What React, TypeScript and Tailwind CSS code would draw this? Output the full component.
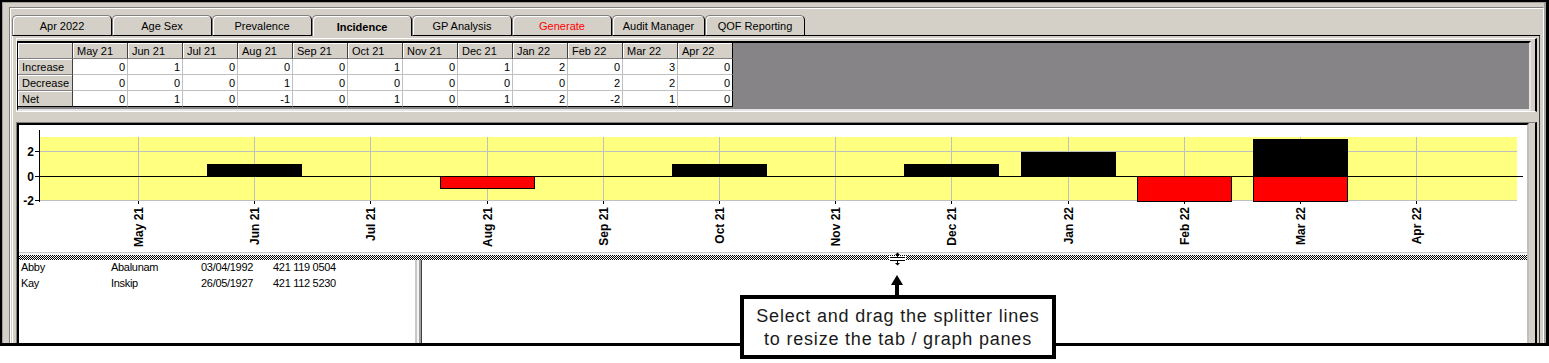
import React from 'react';

const months = ['May 21', 'Jun 21', 'Jul 21', 'Aug 21', 'Sep 21', 'Oct 21', 'Nov 21', 'Dec 21', 'Jan 22', 'Feb 22', 'Mar 22', 'Apr 22'];
const increase = [0, 1, 0, 0, 0, 1, 0, 1, 2, 0, 3, 0];
const decrease = [0, 0, 0, 1, 0, 0, 0, 0, 0, 2, 2, 0];
const net = increase.map((v, i) => v - decrease[i]);

const tabs = [
    { label: 'Apr 2022', w: 'w-[100px]' },
    { label: 'Age Sex', w: 'w-[100px]' },
    { label: 'Prevalence', w: 'w-[100px]' },
    { label: 'Incidence', w: 'w-[100px]', selected: true },
    { label: 'GP Analysis', w: 'w-[100px]' },
    { label: 'Generate', w: 'w-[100px]', red: true },
    { label: 'Audit Manager', w: 'w-[93px]' },
    { label: 'QOF Reporting', w: 'w-[100px]' },
];

const patients = [
    ['Abby', 'Abalunam', '03/04/1992', '421 119 0504'],
    ['Kay', 'Inskip', '26/05/1927', '421 112 5230'],
];

// chart geometry, in page pixels
const X0 = 138;
const DX = 116.2;
const ZERO = 176;
const UNIT = 12.25;

function Tab({ label, w, selected, red }: { label: string; w: string; selected?: boolean; red?: boolean }) {
    return (
        <div
            className={`flex h-[21px] ${w} items-center justify-center rounded-t-[5px] border-t border-r border-l border-t-[#808080] border-r-black border-l-[#808080] pt-[2px] shadow-[inset_1px_1px_0_#fff] ${
                selected ? 'font-bold' : 'border-b border-b-black'
            } ${red ? 'text-[#ff0000]' : ''}`}
        >
            {label}
        </div>
    );
}

function DataGrid() {
    const rows: [string, number[]][] = [
        ['Increase', increase],
        ['Decrease', decrease],
        ['Net', net],
    ];
    return (
        <div className="flex w-[715px] flex-col leading-[16px]">
            <div className="flex">
                <div className="h-[16px] w-[55px] border-r border-b border-r-[#404040] border-b-[#808080] bg-[#d4d0c8] shadow-[inset_1px_1px_0_#fff]" />
                {months.map((m, i) => (
                    <div
                        key={m}
                        className={`h-[16px] w-[55px] border-r border-b border-b-[#808080] bg-[#d4d0c8] pl-[4px] shadow-[inset_1px_1px_0_#fff] ${
                            i === 11 ? 'border-r-black' : 'border-r-[#404040]'
                        }`}
                    >
                        {m}
                    </div>
                ))}
            </div>
            {rows.map(([name, vals], r) => (
                <div key={name} className="flex">
                    <div
                        className={`h-[16px] w-[55px] border-r border-b border-r-[#404040] bg-[#d4d0c8] pl-[4px] shadow-[inset_1px_1px_0_#fff] ${
                            r === 2 ? 'border-b-black' : 'border-b-[#808080]'
                        }`}
                    >
                        {name}
                    </div>
                    {vals.map((v, i) => (
                        <div
                            key={i}
                            className={`h-[16px] w-[55px] border-r border-b bg-white pr-[2px] text-right ${
                                i === 11 ? 'border-r-black' : 'border-r-[#c0c0c0]'
                            } ${r === 2 ? 'border-b-black' : 'border-b-[#c0c0c0]'}`}
                        >
                            {v}
                        </div>
                    ))}
                </div>
            ))}
        </div>
    );
}

function Chart() {
    return (
        <svg width={1508} height={127} viewBox="19 125 1508 127" shapeRendering="crispEdges" className="block">
            <rect x={40} y={137} width={1477} height={64} fill="#ffff80" />
            <line x1={40} x2={1517} y1={151.5} y2={151.5} stroke="#c0c0c0" />
            <line x1={40} x2={1517} y1={200.5} y2={200.5} stroke="#c0c0c0" />
            {months.map((m, i) => {
                const x = Math.round(X0 + i * DX) + 0.5;
                return (
                    <g key={m}>
                        <line x1={x} x2={x} y1={137} y2={201} stroke="#c0c0c0" />
                        <line x1={x} x2={x} y1={201} y2={204} stroke="#000" />
                        <text
                            transform={`translate(${x} 207) rotate(-90)`}
                            textAnchor="end"
                            dominantBaseline="central"
                            fontWeight="bold"
                            fontSize={12}
                            fontFamily="'Liberation Sans', Arial, sans-serif"
                            shapeRendering="auto"
                        >
                            {m}
                        </text>
                    </g>
                );
            })}
            {months.map((m, i) => {
                const c = Math.round(X0 + i * DX);
                const up = increase[i] * UNIT;
                const down = decrease[i] * UNIT;
                return (
                    <g key={`bar-${m}`}>
                        {up > 0 && <rect x={c - 47} y={ZERO - up} width={95} height={up} fill="#000" />}
                        {down > 0 && (
                            <rect x={c - 47 + 0.5} y={ZERO + 0.5} width={94} height={down} fill="#ff0000" stroke="#000" />
                        )}
                    </g>
                );
            })}
            <line x1={40} x2={1523} y1={176.5} y2={176.5} stroke="#000" />
            <line x1={39.5} x2={39.5} y1={130} y2={202} stroke="#000" />
            {[
                ['2', 151.5],
                ['0', 176.5],
                ['-2', 200.5],
            ].map(([t, y]) => (
                <g key={t as string}>
                    <line x1={35} x2={39} y1={y as number} y2={y as number} stroke="#000" />
                    <text
                        x={34}
                        y={y as number}
                        textAnchor="end"
                        dominantBaseline="central"
                        fontWeight="bold"
                        fontSize={12}
                        fontFamily="'Liberation Sans', Arial, sans-serif"
                    >
                        {t}
                    </text>
                </g>
            ))}
        </svg>
    );
}

export default function App() {
    return (
        <div className="relative h-[363px] w-[1549px] overflow-hidden bg-white font-['Liberation_Sans',Arial,sans-serif] text-[11px] text-black">
            {/* window */}
            <div className="flex h-[346px] flex-col overflow-hidden border-t-2 border-r-[3px] border-b-[3px] border-l-2 border-black bg-[#d4d0c8]">
                <div className="flex flex-1 flex-col border-t border-r-2 border-l border-t-[#a0a0a0] border-r-[#a0a0a0] border-l-[#a0a0a0] pt-[4px] pl-[6px]">
                    {/* tab control */}
                    <div className="flex flex-1 flex-col border-t border-r border-l border-t-[#808080] border-r-white border-l-[#808080] pt-[7px] pr-[3px] pl-[2px] shadow-[inset_1px_1px_0_#fff]">
                        <div className="flex">
                            {tabs.map((t) => (
                                <Tab key={t.label} {...t} />
                            ))}
                            <div className="flex-1 border-b border-b-black" />
                        </div>

                        {/* tab page */}
                        <div className="flex flex-1 flex-col border-r border-l border-r-[#404040] border-l-white pt-[2px] pr-[2px] pl-[3px]">
                            {/* table panel */}
                            <div className="border-t border-r-2 border-b border-l border-t-white border-r-black border-b-white border-l-white pt-[2px] pr-[4px]">
                                <div className="h-[70px] border-t-2 border-r-2 border-b-2 border-l border-t-black border-r-[#e4e4e4] border-b-[#e4e4e4] border-l-black bg-[#868486]">
                                    <DataGrid />
                                </div>
                            </div>

                            {/* graph + list panes */}
                            <div className="mt-[10px] flex-1 border-t border-r-2 border-l border-t-[#808080] border-r-black border-l-[#808080] pr-[6px]">
                                <div className="flex h-[240px] flex-col border-t-2 border-r-2 border-l-2 border-t-black border-r-[#c0c0c0] border-l-black">
                                    <div className="h-[127px] bg-white">
                                        <Chart />
                                    </div>
                                    <div className="h-[1px] bg-[#c8c8c8]" />
                                    <div className="h-[2px] bg-[#f4f4f4]" />
                                    <div className="h-[5px] bg-[conic-gradient(#000_25%,#fff_0_50%,#000_0_75%,#fff_0)] bg-[length:2px_2px]" />
                                    <div className="flex flex-1">
                                        <div className="w-[396px] bg-white pl-[2px] tracking-[-0.3px]">
                                            {patients.map((p) => (
                                                <div key={p[0]} className="flex h-[16px] leading-[14px]">
                                                    <span className="w-[90px]">{p[0]}</span>
                                                    <span className="w-[90px]">{p[1]}</span>
                                                    <span className="w-[72px]">{p[2]}</span>
                                                    <span>{p[3]}</span>
                                                </div>
                                            ))}
                                        </div>
                                        <div className="flex w-[7px]">
                                            <div className="w-[2px] bg-[#c8c8c8]" />
                                            <div className="w-[2px] bg-[#f4f4f4]" />
                                            <div className="w-[2px] bg-[#a0a0a0]" />
                                            <div className="w-[1px] bg-[#404040]" />
                                        </div>
                                        <div className="flex-1 bg-white" />
                                    </div>
                                </div>
                            </div>
                        </div>
                    </div>
                </div>
            </div>

            {/* splitter grip */}
            <svg className="absolute top-[252px] left-[889px]" width={17} height={15} viewBox="0 0 17 15" shapeRendering="crispEdges">
                <rect x={0} y={4} width={17} height={6} fill="#fff" />
                <line x1={1} x2={16} y1={5.5} y2={5.5} stroke="#000" />
                <line x1={1} x2={16} y1={8.5} y2={8.5} stroke="#000" />
                <line x1={8.5} x2={8.5} y1={1} y2={5} stroke="#000" />
                <line x1={8.5} x2={8.5} y1={9} y2={13} stroke="#000" />
                <polygon points="6,3 11,3 8.5,0.5" fill="#000" shapeRendering="auto" />
                <polygon points="6,11 11,11 8.5,13.5" fill="#000" shapeRendering="auto" />
            </svg>

            {/* callout arrow */}
            <svg className="absolute top-[274px] left-[890px]" width={14} height={22} viewBox="0 0 14 22">
                <polygon points="7,1 13,11 1,11" fill="#000" />
                <rect x={5} y={10} width={4} height={12} fill="#000" />
            </svg>

            {/* callout */}
            <div className="absolute top-[295px] left-[740px] h-[64px] w-[316px] border-4 border-black bg-white pt-[6px] text-center text-[18px] leading-[23px] tracking-[0.8px] text-[#1a1a1a]">
                <div>Select and drag the splitter lines</div>
                <div>to resize the tab / graph panes</div>
            </div>
        </div>
    );
}
